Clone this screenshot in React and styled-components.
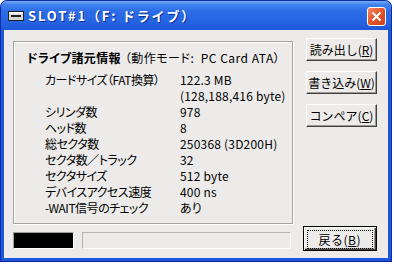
import React from 'react';
import styled, { createGlobalStyle } from 'styled-components';

const GlobalStyle = createGlobalStyle`
  html, body {
    margin: 0;
    padding: 0;
    background: #fff;
  }
  body {
    font-family: "Noto Sans CJK JP", "DejaVu Sans", sans-serif;
    font-size: 12px;
    color: #000;
  }
`;

const Window = styled.div`
  width: 392px;
  height: 262px;
  box-sizing: border-box;
  display: flex;
  flex-direction: column;
  background: #1f57dc;
  border: 1px solid #0b2ea8;
  border-bottom-color: #0a2592;
  border-radius: 7px 7px 0 0;
  overflow: hidden;
`;

const TitleBar = styled.div`
  height: 29px;
  flex: none;
  display: flex;
  align-items: center;
  padding: 0 5px 0 7px;
  background: linear-gradient(
    to bottom,
    #78aef6 0%,
    #4283ee 12%,
    #2d6ce6 35%,
    #2766e2 65%,
    #1e57d8 100%
  );
`;

const TitleText = styled.span`
  margin-left: 4px;
  color: #fff;
  font-weight: bold;
  font-size: 13px;
  letter-spacing: 1.8px;
  text-shadow: 1px 1px 0 #0d2c96;
`;

const CloseButton = styled.div`
  margin-left: auto;
  margin-top: 1px;
  width: 19px;
  height: 19px;
  box-sizing: border-box;
  border: 1px solid #fff;
  border-radius: 3px;
  background: linear-gradient(135deg, #f08a6c 0%, #e2582f 45%, #cc3f1a 100%);
  display: flex;
  align-items: center;
  justify-content: center;
`;

const Client = styled.div`
  flex: 1;
  margin: 0 3px 3px;
  background: #ecebe9;
  display: flex;
  flex-direction: column;
  padding: 8px 11px 7px 9px;
  font-feature-settings: "palt";
`;

const MainRow = styled.div`
  display: flex;
  gap: 13px;
  height: 186px;
`;

const GroupBox = styled.div`
  margin-top: 3px;
  width: 280px;
  height: 183px;
  box-sizing: border-box;
  border: 1px solid #a5a4a0;
  box-shadow: inset 1px 1px 0 #fff, 1px 1px 0 #fff;
  padding: 8px 0 0 13px;
`;

const Heading = styled.div`
  line-height: 16px;
  white-space: nowrap;
  letter-spacing: 0.5px;
`;

const HeadingTitle = styled.span`
  font-weight: bold;
  letter-spacing: 0.3px;
  margin-right: 4px;
`;

const InfoGrid = styled.div`
  margin: 6px 0 0 18px;
  display: grid;
  grid-template-columns: 135px auto;
  line-height: 16px;
  white-space: nowrap;
`;

const Label = styled.div`
  letter-spacing: -0.5px;
`;

const Value = styled.div`
  letter-spacing: 0.2px;
`;

const ButtonColumn = styled.div`
  display: flex;
  flex-direction: column;
  gap: 10px;
`;

const Button = styled.button`
  width: 71px;
  height: 23px;
  padding: 0;
  font-family: inherit;
  font-size: 12px;
  white-space: nowrap;
  color: #000;
  background: #ecebe9;
  border: 1px solid;
  border-color: #fff #404040 #404040 #fff;
  box-shadow: inset -1px -1px 0 #9c9b98;
  display: flex;
  align-items: center;
  justify-content: center;
`;

const BottomRow = styled.div`
  margin-top: 2px;
  display: flex;
  align-items: flex-start;
  height: 25px;
`;

const BlackBox = styled.div`
  margin-top: 6px;
  width: 62px;
  height: 17px;
  box-sizing: border-box;
  border: 1px solid;
  border-color: #a0a09c #fff #fff #a0a09c;
  background: #000;
  box-shadow: inset 1px 1px 0 #000;
`;

const Progress = styled.div`
  margin: 6px 0 0 8px;
  width: 210px;
  height: 17px;
  box-sizing: border-box;
  border: 1px solid;
  border-color: #b6b5b2 #fff #fff #b6b5b2;
  background: #ecebe9;
`;

const DefaultButton = styled.button`
  margin-left: 12px;
  width: 75px;
  height: 25px;
  padding: 2px;
  font-family: inherit;
  font-size: 12px;
  letter-spacing: 0.5px;
  white-space: nowrap;
  color: #000;
  background: #ecebe9;
  border: 1px solid #000;
  box-shadow: inset 1px 1px 0 #fff, inset -1px -1px 0 #404040,
    inset -2px -2px 0 #9c9b98;
  box-sizing: border-box;
`;

const FocusRect = styled.span`
  display: flex;
  align-items: center;
  justify-content: center;
  height: 100%;
  box-sizing: border-box;
  margin: 1px;
  border: 1px dotted #000;
`;

const rows = [
  ['シリンダ数', '978'],
  ['ヘッド数', '8'],
  ['総セクタ数', '250368 (3D200H)'],
  ['セクタ数／トラック', '32'],
  ['セクタサイズ', '512 byte'],
  ['デバイスアクセス速度', '400 ns'],
  ['-WAIT信号のチェック', 'あり'],
];

const DriveIcon = () => (
  <svg width="16" height="10" viewBox="0 0 16 10">
    <rect x="0.5" y="0.5" width="15" height="9" fill="#d8d8d8" stroke="#222" />
    <rect x="1" y="1" width="14" height="2" fill="#fff" />
    <rect x="3" y="4" width="10" height="2" fill="#222" />
  </svg>
);

export default function App() {
  return (
    <>
      <GlobalStyle />
      <Window>
        <TitleBar>
          <DriveIcon />
          <TitleText>SLOT#1（F: ドライブ）</TitleText>
          <CloseButton>
            <svg width="11" height="11" viewBox="0 0 11 11">
              <path d="M1.5 1.5 L9.5 9.5 M9.5 1.5 L1.5 9.5" stroke="#fff" strokeWidth="2" />
            </svg>
          </CloseButton>
        </TitleBar>
        <Client>
          <MainRow>
            <GroupBox>
              <Heading>
                <HeadingTitle>ドライブ諸元情報</HeadingTitle>（動作モード:&nbsp; PC Card ATA）
              </Heading>
              <InfoGrid>
                <Label>カードサイズ（FAT換算）</Label>
                <Value>
                  <div>122.3 MB</div>
                  <div>(128,188,416 byte)</div>
                </Value>
                {rows.map(([label, value]) => (
                  <React.Fragment key={label}>
                    <Label>{label}</Label>
                    <Value>{value}</Value>
                  </React.Fragment>
                ))}
              </InfoGrid>
            </GroupBox>
            <ButtonColumn>
              <Button>読み出し(<u>R</u>)</Button>
              <Button>書き込み(<u>W</u>)</Button>
              <Button>コンペア(<u>C</u>)</Button>
            </ButtonColumn>
          </MainRow>
          <BottomRow>
            <BlackBox />
            <Progress />
            <DefaultButton>
              <FocusRect>戻る(<u>B</u>)</FocusRect>
            </DefaultButton>
          </BottomRow>
        </Client>
      </Window>
    </>
  );
}
